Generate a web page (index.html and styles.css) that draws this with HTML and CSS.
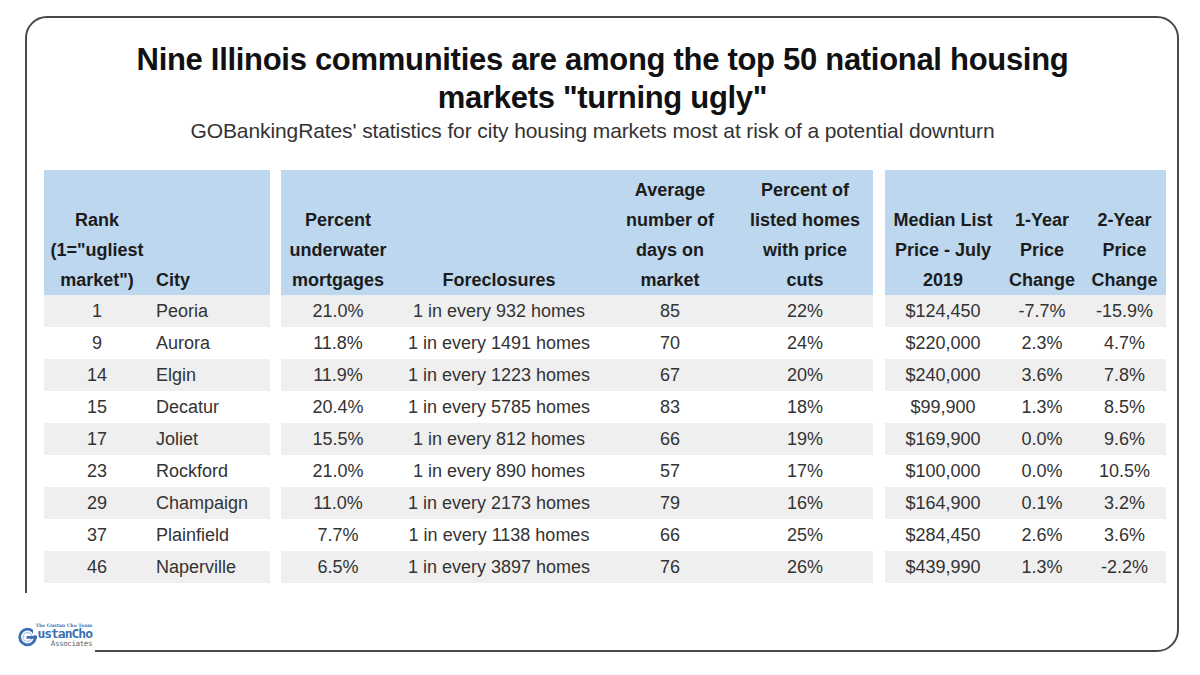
FILE: index.html
```html
<!DOCTYPE html>
<html>
<head>
<meta charset="utf-8">
<link rel="stylesheet" href="styles.css">
</head>
<body>
<div class="frame">
  <h1 class="title">Nine Illinois communities are among the top 50 national housing<br>markets "turning ugly"</h1>
  <p class="subtitle">GOBankingRates' statistics for city housing markets most at risk of a potential downturn</p>

  <div class="tables">
    <div class="block b1">
      <div class="row head">
        <div class="c">Rank<br>(1="ugliest<br>market")</div>
        <div class="l">City</div>
      </div>
      <div class="row g"><div class="c">1</div><div class="l">Peoria</div></div>
      <div class="row"><div class="c">9</div><div class="l">Aurora</div></div>
      <div class="row g"><div class="c">14</div><div class="l">Elgin</div></div>
      <div class="row"><div class="c">15</div><div class="l">Decatur</div></div>
      <div class="row g"><div class="c">17</div><div class="l">Joliet</div></div>
      <div class="row"><div class="c">23</div><div class="l">Rockford</div></div>
      <div class="row g"><div class="c">29</div><div class="l">Champaign</div></div>
      <div class="row"><div class="c">37</div><div class="l">Plainfield</div></div>
      <div class="row g"><div class="c">46</div><div class="l">Naperville</div></div>
    </div>

    <div class="block b2">
      <div class="row head">
        <div class="c">Percent<br>underwater<br>mortgages</div>
        <div class="c">Foreclosures</div>
        <div class="c">Average<br>number of<br>days on<br>market</div>
        <div class="c">Percent of<br>listed homes<br>with price<br>cuts</div>
      </div>
      <div class="row g"><div class="c">21.0%</div><div class="c">1 in every 932 homes</div><div class="c">85</div><div class="c">22%</div></div>
      <div class="row"><div class="c">11.8%</div><div class="c">1 in every 1491 homes</div><div class="c">70</div><div class="c">24%</div></div>
      <div class="row g"><div class="c">11.9%</div><div class="c">1 in every 1223 homes</div><div class="c">67</div><div class="c">20%</div></div>
      <div class="row"><div class="c">20.4%</div><div class="c">1 in every 5785 homes</div><div class="c">83</div><div class="c">18%</div></div>
      <div class="row g"><div class="c">15.5%</div><div class="c">1 in every 812 homes</div><div class="c">66</div><div class="c">19%</div></div>
      <div class="row"><div class="c">21.0%</div><div class="c">1 in every 890 homes</div><div class="c">57</div><div class="c">17%</div></div>
      <div class="row g"><div class="c">11.0%</div><div class="c">1 in every 2173 homes</div><div class="c">79</div><div class="c">16%</div></div>
      <div class="row"><div class="c">7.7%</div><div class="c">1 in every 1138 homes</div><div class="c">66</div><div class="c">25%</div></div>
      <div class="row g"><div class="c">6.5%</div><div class="c">1 in every 3897 homes</div><div class="c">76</div><div class="c">26%</div></div>
    </div>

    <div class="block b3">
      <div class="row head">
        <div class="c">Median List<br>Price - July<br>2019</div>
        <div class="c">1-Year<br>Price<br>Change</div>
        <div class="c">2-Year<br>Price<br>Change</div>
      </div>
      <div class="row g"><div class="c">$124,450</div><div class="c">-7.7%</div><div class="c">-15.9%</div></div>
      <div class="row"><div class="c">$220,000</div><div class="c">2.3%</div><div class="c">4.7%</div></div>
      <div class="row g"><div class="c">$240,000</div><div class="c">3.6%</div><div class="c">7.8%</div></div>
      <div class="row"><div class="c">$99,900</div><div class="c">1.3%</div><div class="c">8.5%</div></div>
      <div class="row g"><div class="c">$169,900</div><div class="c">0.0%</div><div class="c">9.6%</div></div>
      <div class="row"><div class="c">$100,000</div><div class="c">0.0%</div><div class="c">10.5%</div></div>
      <div class="row g"><div class="c">$164,900</div><div class="c">0.1%</div><div class="c">3.2%</div></div>
      <div class="row"><div class="c">$284,450</div><div class="c">2.6%</div><div class="c">3.6%</div></div>
      <div class="row g"><div class="c">$439,990</div><div class="c">1.3%</div><div class="c">-2.2%</div></div>
    </div>
  </div>

  <div class="corner">
    <div class="logo">
      <svg class="logo-g" width="19" height="20" viewBox="0 0 19 20">
        <circle cx="9.5" cy="10" r="7.8" fill="none" stroke="#3d6fb4" stroke-width="2.8"/>
        <circle cx="9.5" cy="10" r="4.4" fill="none" stroke="#a9c4e6" stroke-width="1.2"/>
        <rect x="8.5" y="9" width="10.5" height="2.8" fill="#3d6fb4"/>
        <rect x="15" y="3" width="4" height="5.2" fill="#fff"/>
      </svg>
      <div class="logo-text">
        <span class="logo-top">The Gustan Cho Team</span>
        <span class="logo-main">ustanCho</span>
        <span class="logo-sub">Associates</span>
      </div>
    </div>
  </div>
</div>
</body>
</html>
```

FILE: styles.css
```css
html, body {
  margin: 0;
  padding: 0;
  background: #ffffff;
}

body {
  font-family: "Liberation Sans", Arial, sans-serif;
  width: 1200px;
  height: 675px;
  overflow: hidden;
}

.frame {
  position: relative;
  box-sizing: border-box;
  margin: 16px 0 0 25px;
  width: 1154px;
  height: 636px;
  border: 2px solid #4a4a4a;
  border-radius: 22px;
  padding: 23px 10px 0 17px;
}

.title {
  margin: 0;
  font-size: 31px;
  line-height: 38px;
  font-weight: bold;
  letter-spacing: -0.3px;
  color: #111111;
  text-align: center;
  padding-right: 6px;
}

.subtitle {
  margin: 3px 0 0 0;
  font-size: 21px;
  line-height: 22px;
  letter-spacing: -0.1px;
  color: #333333;
  text-align: center;
  padding-right: 26px;
}

.tables {
  display: flex;
  gap: 11px;
  margin-top: 28px;
}

.block {
  display: flex;
  flex-direction: column;
}

.b1 { width: 226px; }
.b2 { width: 592px; }
.b3 { width: 281px; margin-left: 1px; }

.row {
  display: grid;
  height: 32px;
  font-size: 18px;
  line-height: 32px;
  color: #333333;
}

.b1 .row { grid-template-columns: 106px 120px; }
.b2 .row { grid-template-columns: 114px 208px 134px 136px; }
.b3 .row { grid-template-columns: 116px 82px 83px; }

.row.g { background: #efefef; }

.row.head {
  height: 125px;
  background: #bdd7ee;
  font-weight: bold;
  line-height: 30px;
  color: #1c1c1c;
  align-items: end;
}

.c {
  text-align: center;
  white-space: nowrap;
}

.l {
  text-align: left;
  padding-left: 6px;
  white-space: nowrap;
}

.corner {
  position: absolute;
  left: -9px;
  bottom: -10px;
  width: 77px;
  height: 67px;
  background: #ffffff;
}

.logo {
  display: flex;
  align-items: flex-start;
  margin-top: 30px;
}

.logo-g {
  display: block;
  margin-top: 4px;
  flex: none;
}

.logo-text {
  display: flex;
  flex-direction: column;
  align-items: flex-end;
  width: 55px;
}

.logo-top {
  font-family: "DejaVu Serif", serif;
  font-size: 4.6px;
  line-height: 5px;
  font-weight: bold;
  color: #3d6fb4;
  white-space: nowrap;
}

.logo-main {
  font-family: "DejaVu Sans Mono", monospace;
  font-size: 13px;
  line-height: 12px;
  font-weight: bold;
  color: #3d6fb4;
  letter-spacing: -1px;
  white-space: nowrap;
}

.logo-sub {
  font-family: "DejaVu Sans Mono", monospace;
  font-size: 7.5px;
  line-height: 8px;
  color: #666666;
  letter-spacing: -0.4px;
  white-space: nowrap;
}
```
